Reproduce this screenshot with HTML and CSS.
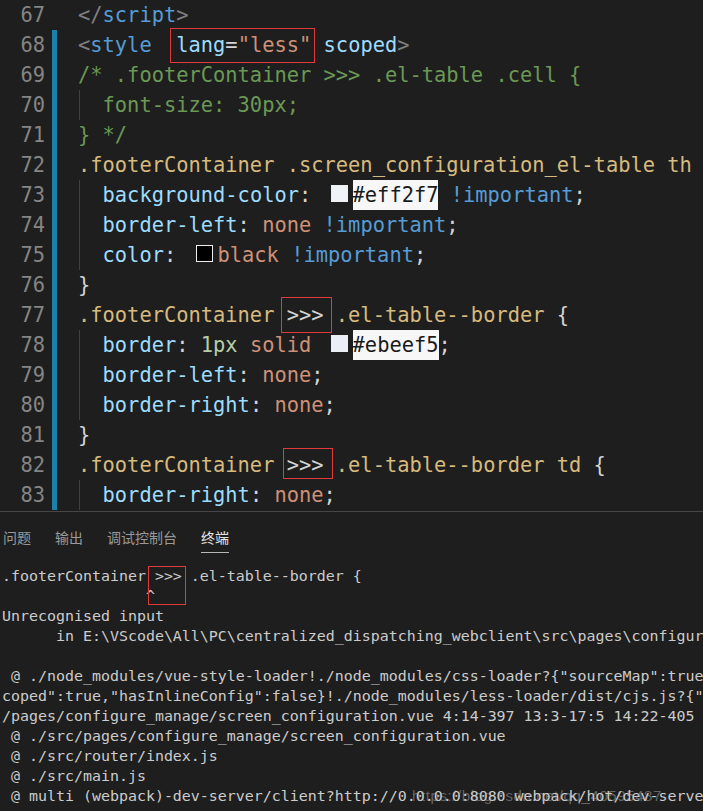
FILE: index.html
```html
<!DOCTYPE html>
<html lang="zh">
<head>
    <meta charset="UTF-8">
    <meta name="viewport" content="width=device-width, initial-scale=1.0">
    <title>screen_configuration.vue - VS Code</title>
    <link rel="stylesheet" href="styles.css">
</head>
<body>
    <div class="shot">
        <div class="editor">
            <div class="line"><span class="ln">67</span><span class="gutter"></span><span class="code"><span class="punc">&lt;/</span><span class="tag">script</span><span class="punc">&gt;</span></span></div>
            <div class="line mod"><span class="ln">68</span><span class="gutter"></span><span class="code"><span class="punc">&lt;</span><span class="tag">style</span>  <span class="attr">lang</span>=<span class="str">"less"</span> <span class="attr">scoped</span><span class="punc">&gt;</span></span></div>
            <div class="line mod"><span class="ln">69</span><span class="gutter"></span><span class="code"><span class="cmt">/* .footerContainer &gt;&gt;&gt; .el-table .cell {</span></span></div>
            <div class="line mod ind"><span class="ln">70</span><span class="gutter"></span><span class="code"><span class="cmt">  font-size: 30px;</span></span></div>
            <div class="line mod"><span class="ln">71</span><span class="gutter"></span><span class="code"><span class="cmt">} */</span></span></div>
            <div class="line mod"><span class="ln">72</span><span class="gutter"></span><span class="code"><span class="sel">.footerContainer .screen_configuration_el-table th</span></span></div>
            <div class="line mod ind"><span class="ln">73</span><span class="gutter"></span><span class="code">  <span class="prop">background-color</span>: <span class="swatch light"></span><span class="hl">#eff2f7</span> <span class="kw">!important</span>;</span></div>
            <div class="line mod ind"><span class="ln">74</span><span class="gutter"></span><span class="code">  <span class="prop">border-left</span>: <span class="str">none</span> <span class="kw">!important</span>;</span></div>
            <div class="line mod ind"><span class="ln">75</span><span class="gutter"></span><span class="code">  <span class="prop">color</span>: <span class="swatch dark"></span><span class="str">black</span> <span class="kw">!important</span>;</span></div>
            <div class="line mod"><span class="ln">76</span><span class="gutter"></span><span class="code">}</span></div>
            <div class="line mod"><span class="ln">77</span><span class="gutter"></span><span class="code"><span class="sel">.footerContainer</span> &gt;&gt;&gt; <span class="sel">.el-table--border</span> {</span></div>
            <div class="line mod ind"><span class="ln">78</span><span class="gutter"></span><span class="code">  <span class="prop">border</span>: <span class="num">1px</span> <span class="str">solid</span> <span class="swatch pale"></span><span class="hl">#ebeef5</span>;</span></div>
            <div class="line mod ind"><span class="ln">79</span><span class="gutter"></span><span class="code">  <span class="prop">border-left</span>: <span class="str">none</span>;</span></div>
            <div class="line mod ind"><span class="ln">80</span><span class="gutter"></span><span class="code">  <span class="prop">border-right</span>: <span class="str">none</span>;</span></div>
            <div class="line mod"><span class="ln">81</span><span class="gutter"></span><span class="code">}</span></div>
            <div class="line mod"><span class="ln">82</span><span class="gutter"></span><span class="code"><span class="sel">.footerContainer</span> &gt;&gt;&gt; <span class="sel">.el-table--border td</span> {</span></div>
            <div class="line mod ind"><span class="ln">83</span><span class="gutter"></span><span class="code">  <span class="prop">border-right</span>: <span class="str">none</span>;</span></div>
        </div>

        <div class="panel">
            <div class="tabs">
                <span class="tab">问题</span>
                <span class="tab">输出</span>
                <span class="tab">调试控制台</span>
                <span class="tab active">终端</span>
            </div>
            <pre class="term">.footerContainer &gt;&gt;&gt; .el-table--border {
                ^
Unrecognised input
      in E:\VScode\All\PC\centralized_dispatching_webclient\src\pages\configure_manage\screen_configuration.vue

 @ ./node_modules/vue-style-loader!./node_modules/css-loader?{"sourceMap":true}!./node_modules/vue-loader/lib/style-compiler/index.js?{"vue":true,"id":"data-v-1","s
coped":true,"hasInlineConfig":false}!./node_modules/less-loader/dist/cjs.js?{"sourceMap":true}!./node_modules/vue-loader/lib/selector.js?type=styles&amp;index=0!./src
/pages/configure_manage/screen_configuration.vue 4:14-397 13:3-17:5 14:22-405
 @ ./src/pages/configure_manage/screen_configuration.vue
 @ ./src/router/index.js
 @ ./src/main.js
 @ multi (webpack)-dev-server/client?http://0.0.0.0:8080 webpack/hot/dev-server ./src/main.js</pre>
        </div>

        <!-- red annotation boxes drawn over the screenshot -->
        <div class="mark mark-lang"></div>
        <div class="mark mark-77"></div>
        <div class="mark mark-82"></div>
        <div class="mark mark-term"></div>
        <div class="watermark">https://blog.csdn.net/qq_40595487</div>
    </div>
</body>
</html>
```

FILE: styles.css
```css
:root {
    --bg: #1e1e1e;
    --text: #d4d4d4;
    --line-no: #858585;
    --gutter-mod: #1b81a8;
    --guide: #404040;
    --mark: #e03b3b;
}

* {
    margin: 0;
    padding: 0;
    box-sizing: border-box;
}

body {
    background-color: var(--bg);
    color: var(--text);
    overflow: hidden;
}

.shot {
    position: relative;
    width: 703px;
    height: 811px;
    overflow: hidden;
}

/* editor */

.editor {
    font-family: "DejaVu Sans Mono", "Liberation Mono", monospace;
    font-size: 20.4px;
    padding-bottom: 1px;
}

.line {
    display: grid;
    grid-template-columns: 45px 33px 1fr;
    height: 30px;
    line-height: 30px;
    white-space: pre;
}

.ln {
    color: var(--line-no);
    text-align: right;
}

.gutter {
    margin-left: 7px;
    width: 5px;
}

.mod .gutter {
    background-color: var(--gutter-mod);
}

.code {
    overflow: hidden;
}

.ind .code {
    background: linear-gradient(var(--guide), var(--guide)) no-repeat 1px 0 / 1px 100%;
}

.punc { color: #808080; }
.tag  { color: #569cd6; }
.attr { color: #9cdcfe; }
.str  { color: #ce9178; }
.cmt  { color: #6a9955; }
.sel  { color: #d7ba7d; }
.prop { color: #9cdcfe; }
.num  { color: #b5cea8; }
.kw   { color: #569cd6; }

.swatch {
    display: inline-block;
    width: 17px;
    height: 17px;
    margin: 0 5px 0 7px;
    border: 1px solid #eeeeee;
}

.swatch.light { background-color: #eff2f7; }
.swatch.pale  { background-color: #ebeef5; }
.swatch.dark  { background-color: #000000; }

.hl {
    display: inline-block;
    vertical-align: top;
    line-height: 30px;
    height: 30px;
    background-color: #f7f7f7;
    color: #1a1a1a;
}

/* panel */

.panel {
    border-top: 1px solid #454545;
}

.tabs {
    display: flex;
    gap: 24px;
    padding: 16px 0 0 3px;
    font-family: "Noto Sans CJK SC", sans-serif;
    font-size: 14px;
}

.tab {
    line-height: 18px;
    padding-bottom: 6px;
    border-bottom: 1px solid transparent;
    color: #9a9a9a;
}

.tab.active {
    color: #e7e7e7;
    border-bottom-color: #b8b8b8;
}

.term {
    margin-top: 13px;
    padding-left: 2px;
    font-family: "DejaVu Sans Mono", "Liberation Mono", monospace;
    font-size: 14.95px;
    line-height: 20px;
    color: #cccccc;
    white-space: pre;
    overflow: hidden;
}

/* overlays */

.mark {
    position: absolute;
    border: 1px solid var(--mark);
}

.mark-lang { left: 170px; top: 28px; width: 145px; height: 35px; }
.mark-77   { left: 281px; top: 297px; width: 51px; height: 36px; }
.mark-82   { left: 283px; top: 448px; width: 50px; height: 31px; }
.mark-term { left: 148px; top: 566px; width: 38px; height: 39px; }

.watermark {
    position: absolute;
    left: 412px;
    top: 787px;
    font-family: "Liberation Sans", sans-serif;
    font-size: 15px;
    letter-spacing: 0.6px;
    color: rgba(190, 190, 190, 0.45);
    white-space: nowrap;
}
```
